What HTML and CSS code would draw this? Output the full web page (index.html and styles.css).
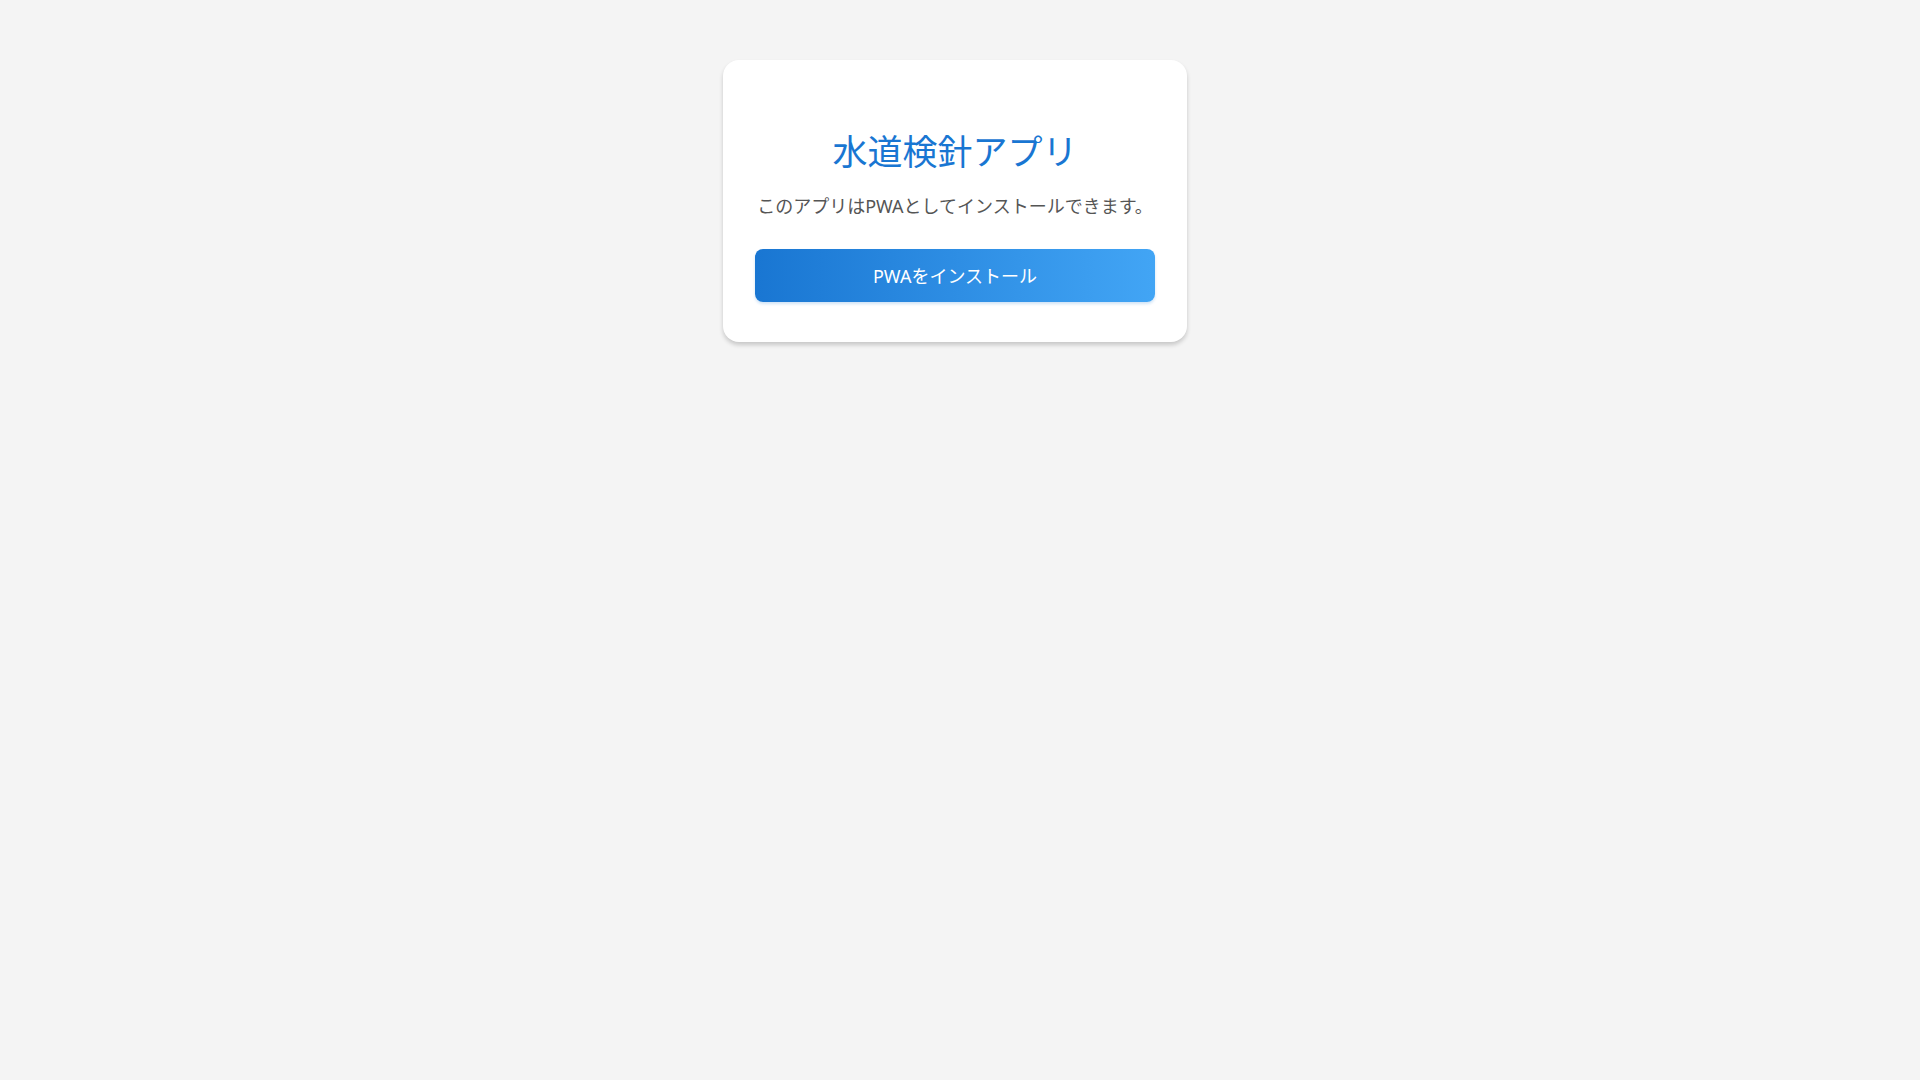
FILE: index.html
```html
<!DOCTYPE html>
<html lang="ja">
<head>
	<meta charset="utf-8">
	<title>水道検針アプリ</title>
	<link rel="stylesheet" href="styles.css">
</head>
<body>
	<div class="main">
		<div class="install-card">
			<h1 class="app-title">水道検針アプリ</h1>
			<p class="app-note">このアプリはPWAとしてインストールできます。</p>
			<button id="install-button" class="install-button">PWAをインストール</button>
		</div>
	</div>
</body>
</html>
```

FILE: styles.css
```css
body {
	margin: 0;
	padding: 32px 42px 32px 32px;
	min-height: 100vh;
	background: #f4f4f4;
	font-family: "Noto Sans", "Noto Sans CJK JP", sans-serif;
}

.main {
	display: flex;
	justify-content: center;
	padding-top: 28px;
}

.install-card {
	width: 400px;
	padding: 32px 32px 40px;
	background: #fff;
	border-radius: 16px;
	box-shadow: 0 3px 4px rgba(0, 0, 0, 0.18);
	display: flex;
	flex-direction: column;
	align-items: center;
}

.app-title {
	margin: 39px 0 21px;
	font-size: 35px;
	line-height: 42px;
	font-weight: normal;
	color: #1976d2;
}

.app-note {
	margin: 0 0 31px;
	font-size: 18px;
	line-height: 24px;
	color: #555;
}

.install-button {
	width: 100%;
	padding: 16px 15px 14px;
	border: none;
	border-radius: 8px;
	background: linear-gradient(90deg, #1976d2, #42a5f5);
	box-shadow: 0 2px 3px rgba(25, 118, 210, 0.2);
	color: #fff;
	font-family: inherit;
	font-size: 18px;
	line-height: 23px;
	cursor: pointer;
}
```
